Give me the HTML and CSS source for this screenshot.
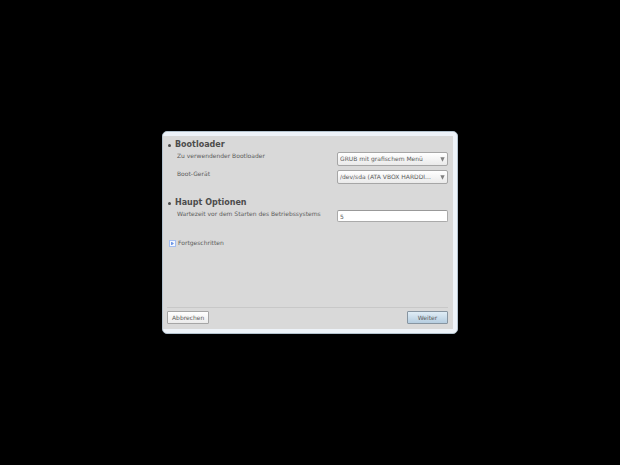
FILE: index.html
```html
<!DOCTYPE html>
<html lang="de">
<head>
  <meta charset="UTF-8" />
  <meta name="viewport" content="width=device-width, initial-scale=1.0" />
  <title>Bootloader</title>
  <link rel="stylesheet" href="styles.css">
</head>
<body>
  <form class="dialog">
    <div class="content">
      <section>
        <h2>Bootloader</h2>
        <div class="row">
          <label for="loader">Zu verwendender Bootloader</label>
          <div class="dropdown">
            <select id="loader">
              <option>GRUB mit grafischem Menü</option>
            </select>
            <svg class="arrow" viewBox="0 0 5 5" aria-hidden="true"><path d="M0.3 0.3h4.4L2.5 4.7z" /></svg>
          </div>
        </div>
        <div class="row">
          <label for="device">Boot-Gerät</label>
          <div class="dropdown">
            <select id="device">
              <option>/dev/sda (ATA VBOX HARDDI...</option>
            </select>
            <svg class="arrow" viewBox="0 0 5 5" aria-hidden="true"><path d="M0.3 0.3h4.4L2.5 4.7z" /></svg>
          </div>
        </div>
      </section>

      <section>
        <h2>Haupt Optionen</h2>
        <div class="row">
          <label for="delay">Wartezeit vor dem Starten des Betriebssystems</label>
          <input type="text" id="delay" value="5">
        </div>
      </section>

      <button type="button" class="expander">
        <svg viewBox="0 0 7 7" aria-hidden="true">
          <rect x="0.5" y="0.5" width="6" height="6" fill="#f4f8ff" stroke="#a3bdf0" />
          <path d="M2 2h1l2 1.5L3 5H2z" fill="#6f97e6" />
        </svg>
        Fortgeschritten
      </button>

      <div class="buttons">
        <button type="button">Abbrechen</button>
        <button type="submit" class="primary">Weiter</button>
      </div>
    </div>
  </form>
</body>
</html>
```

FILE: styles.css
```css
* {
  box-sizing: border-box;
}
body {
  display: flex;
  align-items: center;
  justify-content: center;
  min-height: 100vh;
  margin: 0;
  background: #000;
  color: #5c5c5c;
  font-family: "DejaVu Sans", sans-serif;
  font-size: 6px;
  line-height: 8px;
}
button, input, select {
  font: inherit;
  color: inherit;
}
.dialog {
  width: 90%;
  max-width: 296px;
  padding: 4px 4px 4px 0;
  border: 1px solid #b4c3cf;
  border-radius: 5px;
  background: #eef3f9;
}
.content {
  display: flex;
  flex-direction: column;
  min-height: 193px;
  padding: 4px 5px 5px 4px;
  background: #d9d9d9;
}
section {
  margin-bottom: 11px;
}
h2 {
  display: flex;
  align-items: center;
  gap: 4px;
  margin: 0;
  color: #4c4c4c;
  font-size: 8px;
  line-height: 10px;
}
h2::before {
  content: "";
  width: 3px;
  height: 3px;
  margin-left: 1px;
  border-radius: 50%;
  background: #4c4c4c;
}
.row {
  display: grid;
  grid-template-columns: 1fr 111px;
  align-items: start;
  margin-bottom: 2px;
  padding-left: 10px;
}
.row label {
  padding-top: 2px;
  white-space: nowrap;
}
.row .dropdown,
.row input {
  margin-top: 2px;
}
section .row:last-child {
  margin-bottom: 14px;
}
section {
  margin-bottom: 0;
}
.dropdown {
  display: grid;
  align-items: center;
}
.dropdown select {
  grid-area: 1 / 1;
  width: 100%;
  height: 14px;
  padding: 0 12px 0 2px;
  appearance: none;
  border: 1px solid #a6a6a6;
  border-radius: 2px;
  background: linear-gradient(#fff, #eaeaea);
}
.arrow {
  grid-area: 1 / 1;
  justify-self: end;
  width: 5px;
  height: 5px;
  margin-right: 3px;
  fill: #808080;
  pointer-events: none;
}
.row input {
  width: 100%;
  height: 12px;
  padding: 0 2px;
  border: 1px solid #aaa;
  border-top-color: #999;
  border-radius: 2px;
  background: #fff;
}
.expander {
  display: flex;
  align-items: center;
  align-self: flex-start;
  gap: 2px;
  margin-top: 3px;
  padding: 0 2px;
  border: 0;
  background: none;
}
.expander svg {
  width: 7px;
  height: 7px;
}
.buttons {
  display: flex;
  justify-content: space-between;
  margin-top: auto;
  padding-top: 3px;
  border-top: 1px solid #c8c8c8;
}
.buttons button {
  min-width: 41px;
  height: 13px;
  padding: 0 4px;
  border: 1px solid #a6a6a6;
  border-radius: 1px;
  background: linear-gradient(#fff, #ebebeb);
}
.buttons .primary {
  border-color: #8795a1;
  background: linear-gradient(#e0edf6, #b5cde0);
}
```
